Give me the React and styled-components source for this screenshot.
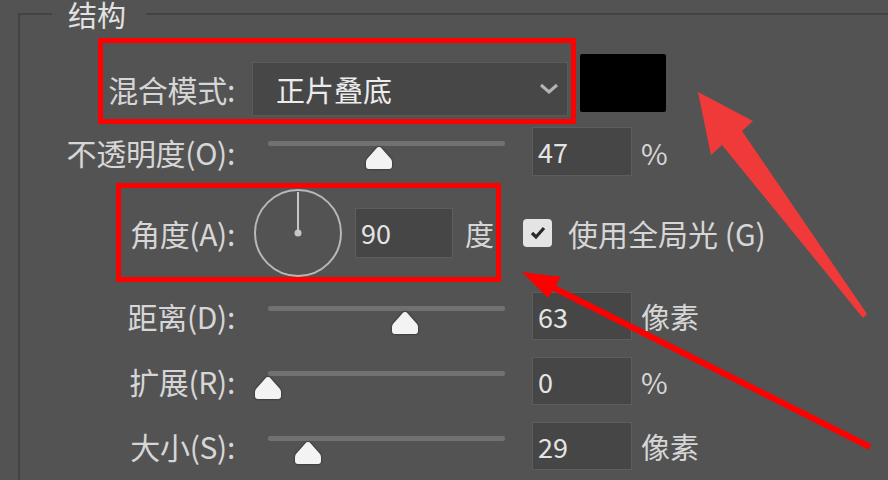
import styled, { createGlobalStyle } from "styled-components";

const GlobalStyle = createGlobalStyle`
  html, body {
    margin: 0;
    padding: 0;
    background: #535353;
  }
  body {
    font-family: "Noto Sans CJK SC", "Noto Sans", sans-serif;
  }
`;

const Page = styled.div`
  position: relative;
  width: 888px;
  height: 480px;
  overflow: hidden;
  background: #535353;
  color: #d6d6d6;
  font-size: 30px;
`;

const Group = styled.fieldset`
  margin: -1px 0 0 18px;
  padding: 0;
  min-width: 0;
  min-height: 540px;
  border: none;
  border-left: 2px solid #434343;
  border-top: 2px solid #434343;
  display: flex;
  flex-direction: column;
`;

const Title = styled.legend`
  margin-left: 32px;
  padding: 0 20px 0 16px;
  font-size: 29px;
  line-height: 30px;
  color: #e2e2e2;
`;

const Row = styled.div`
  display: flex;
  align-items: ${(p) => p.$align || "center"};
  margin-top: ${(p) => p.$mt || 0}px;
  margin-left: ${(p) => p.$ml || 0}px;
  height: ${(p) => (p.$h ? `${p.$h}px` : "auto")};
`;

const Highlight = styled.div`
  box-sizing: border-box;
  display: flex;
  align-items: center;
  height: ${(p) => p.$h}px;
  padding: ${(p) => p.$pad || "0"};
  border: 5px solid #ff0000;
`;

const Label = styled.div`
  width: ${(p) => p.$w}px;
  flex: none;
  text-align: right;
  white-space: nowrap;
  line-height: 1;
  letter-spacing: -0.3px;
`;

const Select = styled.div`
  box-sizing: border-box;
  display: flex;
  align-items: center;
  justify-content: space-between;
  width: 316px;
  height: 54px;
  margin-left: 17px;
  padding: 0 8px 0 23px;
  background: #474747;
  border: 1px solid #5a5a5a;
  color: #ececec;
  font-size: 29px;
`;

const Swatch = styled.div`
  width: 86px;
  height: 58px;
  margin: 16px 0 0 4px;
  background: #000;
  border-radius: 2px;
`;

const Slider = styled.div`
  position: relative;
  align-self: stretch;
  width: 237px;
  margin-left: 33px;
  flex: none;
`;

const Track = styled.div`
  height: 5px;
  margin-top: 14px;
  border-radius: 2px;
  background: #717171;
`;

const Thumb = styled.svg`
  position: absolute;
  top: 19px;
  margin-left: -14px;
  filter: drop-shadow(0 0 1px rgba(0, 0, 0, 0.6));
`;

const Field = styled.div`
  box-sizing: border-box;
  display: flex;
  align-items: center;
  flex: none;
  width: ${(p) => p.$w || 100}px;
  height: ${(p) => p.$h || 48}px;
  margin-left: ${(p) => p.$ml || 27}px;
  padding-left: 5px;
  background: #464646;
  border: 1px solid #5d5d5d;
  color: #e4e4e4;
  font-size: 27px;
`;

const Unit = styled.span`
  margin-left: ${(p) => p.$ml || 9}px;
  white-space: nowrap;
  font-size: 29px;
`;

const Dial = styled.svg`
  flex: none;
  margin-left: 18px;
`;

const Check = styled.div`
  display: flex;
  align-items: center;
  justify-content: center;
  flex: none;
  width: 29px;
  height: 28px;
  margin-left: 22px;
  border-radius: 4px;
  background: #e4e4e4;
`;

const CheckText = styled.span`
  margin-left: 16px;
  white-space: nowrap;
`;

const Overlay = styled.svg`
  position: absolute;
  left: 0;
  top: 0;
  pointer-events: none;
`;

const SliderThumb = ({ pos }) => (
  <Thumb width="28" height="24" viewBox="0 0 28 24" style={{ left: `${pos * 100}%` }}>
    <path
      d="M14 1 Q15.6 1 16.7 2.4 L26 13 Q27 14.3 27 16 L27 20 Q27 23 24 23 L4 23 Q1 23 1 20 L1 16 Q1 14.3 2 13 L11.3 2.4 Q12.4 1 14 1 Z"
      fill="#f3f3f3"
    />
  </Thumb>
);

const SliderRow = ({ mt, label, pos, value, unit }) => (
  <Row $mt={mt} $h={48}>
    <Label $w={215}>{label}</Label>
    <Slider>
      <Track />
      <SliderThumb pos={pos} />
    </Slider>
    <Field>{value}</Field>
    <Unit>{unit}</Unit>
  </Row>
);

export default function App() {
  return (
    <Page>
      <GlobalStyle />
      <Group>
        <Title>结构</Title>

        <Row $mt={9} $ml={78} $align="flex-start">
          <Highlight $h={86} $pad="16px 3px 0 0">
            <Label $w={132}>混合模式:</Label>
            <Select>
              正片叠底
              <svg width="20" height="12" viewBox="0 0 20 12">
                <polyline points="2,2 10,9 18,2" fill="none" stroke="#b4b4b4" strokeWidth="3" />
              </svg>
            </Select>
          </Highlight>
          <Swatch />
        </Row>

        <Row $mt={3} $h={49}>
          <Label $w={215}>不透明度(O):</Label>
          <Slider>
            <Track />
            <SliderThumb pos={0.47} />
          </Slider>
          <Field $h={49}>47</Field>
          <Unit>%</Unit>
        </Row>

        <Row $mt={7} $ml={96}>
          <Highlight $h={99} $pad="0 2px 0 0">
            <Label $w={114}>角度(A):</Label>
            <Dial width="90" height="90" viewBox="0 0 90 90">
              <circle cx="45" cy="45" r="43" fill="none" stroke="#b8b8b8" strokeWidth="2" />
              <line x1="45" y1="45" x2="45" y2="4" stroke="#c6c6c6" strokeWidth="2" />
              <circle cx="45" cy="45" r="3.5" fill="#c6c6c6" />
            </Dial>
            <Field $w={98} $h={50} $ml={12}>90</Field>
            <Unit $ml={12}>度</Unit>
          </Highlight>
          <Check>
            <svg width="18" height="16" viewBox="0 0 18 16">
              <polyline points="3,8 7,12 15,3" fill="none" stroke="#2a2a2a" strokeWidth="3.2" />
            </svg>
          </Check>
          <CheckText>使用全局光 (G)</CheckText>
        </Row>

        <SliderRow mt={10} label="距离(D):" pos={0.58} value="63" unit="像素" />
        <SliderRow mt={17} label="扩展(R):" pos={0} value="0" unit="%" />
        <SliderRow mt={17} label="大小(S):" pos={0.17} value="29" unit="像素" />
      </Group>

      <Overlay width="888" height="480" viewBox="0 0 888 480">
        <polygon
          points="698,92 753,121 742,131 867,314 863,318 722,145 711,155"
          fill="#f03a3a"
        />
        <line x1="870" y1="447" x2="548" y2="285" stroke="#ff0000" strokeWidth="6" />
        <polygon points="522,272 561,277 548,298" fill="#ff0000" />
      </Overlay>
    </Page>
  );
}
